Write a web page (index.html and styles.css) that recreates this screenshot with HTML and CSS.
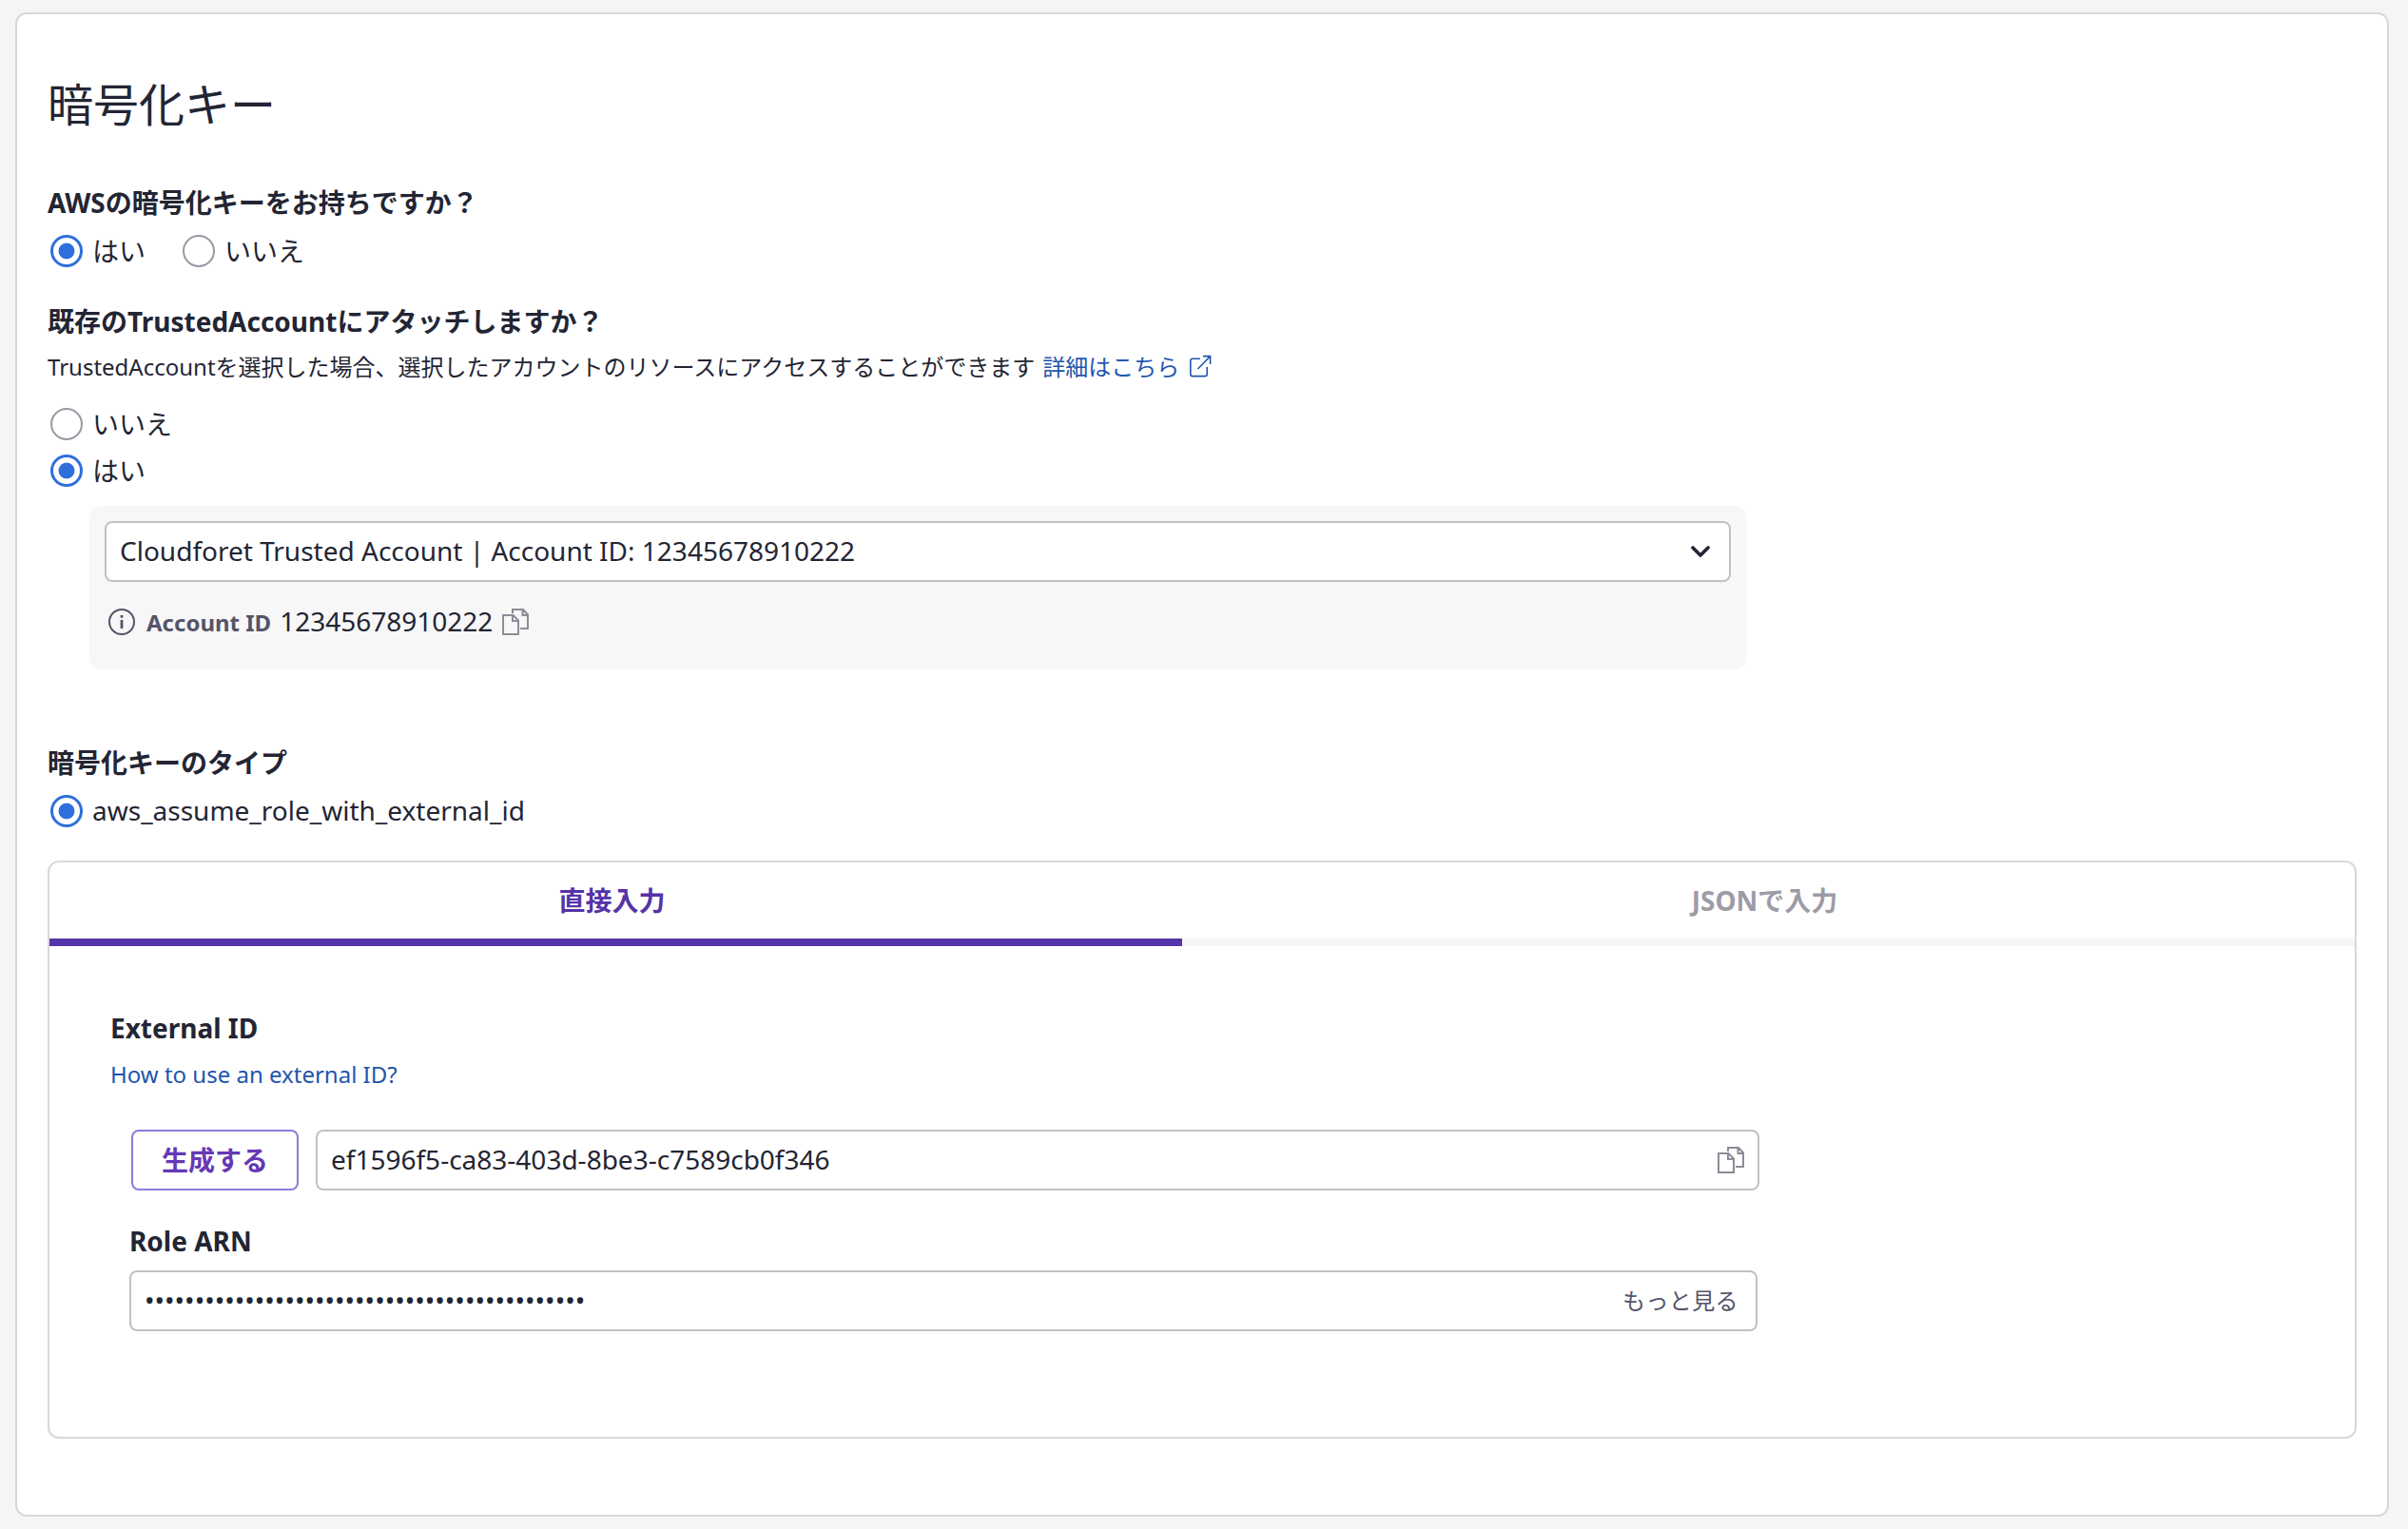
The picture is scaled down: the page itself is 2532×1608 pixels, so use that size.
FILE: index.html
```html
<!DOCTYPE html>
<html lang="ja">
<head>
<meta charset="utf-8">
<title>暗号化キー</title>
<link rel="stylesheet" href="styles.css">
</head>
<body>
<svg class="defs" width="0" height="0">
  <symbol id="copy" viewBox="0 0 28 28">
    <path d="M1 7h10.500l5.500 5.500V27H1zM11 7v6h6M11 5V1h11l5 5.500V21h-8M21.500 1v6H27" fill="none" stroke="currentColor" stroke-width="2"/>
  </symbol>
</svg>
<main class="card">
  <h1 class="title">暗号化キー</h1>

  <section class="field">
    <h2 class="label">AWSの暗号化キーをお持ちですか？</h2>
    <div class="options">
      <label class="option"><span class="radio radio-on"></span>はい</label>
      <label class="option"><span class="radio"></span>いいえ</label>
    </div>
  </section>

  <section class="field trusted">
    <h2 class="label">既存のTrustedAccountにアタッチしますか？</h2>
    <p class="help"><span>TrustedAccountを選択した場合、選択したアカウントのリソースにアクセスすることができます</span><a class="link">詳細はこちら</a><svg class="external" viewBox="0 0 24 24"><path d="M12 4.200H4A2.200 2.200 0 0 0 1.800 6.400v14A2.200 2.200 0 0 0 4 22.600h13a2.200 2.200 0 0 0 2.200-2.200V13M15 1.600h7.600V10M22.600 1.600L9.500 15" fill="none" stroke="currentColor" stroke-width="1.600"/></svg></p>
    <div class="option-list">
      <label class="option"><span class="radio"></span>いいえ</label>
      <label class="option"><span class="radio radio-on"></span>はい</label>
    </div>
    <div class="account-panel">
      <div class="box select">
        <span class="value">Cloudforet Trusted Account | Account ID: 12345678910222</span>
        <svg class="chevron" viewBox="0 0 20 12"><path d="M2 2l8 8 8-8" fill="none" stroke="currentColor" stroke-width="3.600" stroke-linecap="round" stroke-linejoin="round"/></svg>
      </div>
      <div class="account">
        <svg class="info" viewBox="0 0 28 28"><circle cx="14" cy="14" r="13" fill="none" stroke="currentColor" stroke-width="2"/><path d="M12.600 7h2.800v2.800h-2.800zM12.600 12h2.800v9h-2.800z" fill="currentColor"/></svg>
        <strong class="account-label">Account ID</strong>
        <span class="account-id value">12345678910222</span>
        <svg class="copy"><use href="#copy"/></svg>
      </div>
    </div>
  </section>

  <section class="field key-type">
    <h2 class="label">暗号化キーのタイプ</h2>
    <div class="options">
      <label class="option"><span class="radio radio-on"></span><span class="value">aws_assume_role_with_external_id</span></label>
    </div>
  </section>

  <section class="tabs">
    <nav class="tab-bar">
      <div class="tab tab-active">直接入力</div>
      <div class="tab">JSONで入力</div>
    </nav>
    <div class="tab-body">
      <h3 class="sub">External ID</h3>
      <a class="link how-to">How to use an external ID?</a>
      <div class="generate-row">
        <button class="generate" type="button">生成する</button>
        <div class="box external-id"><span class="value">ef1596f5-ca83-403d-8be3-c7589cb0f346</span><svg class="copy"><use href="#copy"/></svg></div>
      </div>
      <div class="role">
        <h3 class="sub">Role ARN</h3>
        <div class="box role-input"><span class="value">••••••••••••••••••••••••••••••••••••••••••••</span><span class="more">もっと見る</span></div>
      </div>
    </div>
  </section>
</main>
</body>
</html>
```
FILE: styles.css
```css
* { box-sizing: border-box; }
body {
  margin: 0;
  height: 1608px;
  padding: 13px 20px 13px 16px;
  background: #f5f5f5;
  color: #232533;
  font-family: "Noto Sans", "Noto Sans CJK JP", sans-serif;
  font-size: 28px;
  line-height: 40px;
}
h1, h2, h3, p { margin: 0; }
.defs { position: absolute; }
.card {
  height: 1582px;
  padding: 65px 32px 0;
  background: #fff;
  border: 2px solid #d8d8d8;
  border-radius: 12px;
}
.title { font-size: 48px; font-weight: 400; line-height: 60px; }
.field { display: flex; flex-direction: column; }
.label { margin-top: 53px; font-size: 28px; font-weight: 700; line-height: 40px; }
.options { display: flex; gap: 36px; margin-top: 11px; }
.option { display: flex; align-items: center; gap: 7px; height: 40px; }
.radio {
  width: 34px;
  height: 34px;
  margin: 3px;
  border: 2px solid #9a99a3;
  border-radius: 50%;
}
.radio-on {
  border: 3px solid #2f6fdd;
  background: radial-gradient(circle, #2f6fdd 8px, #fff 8.8px);
}
/* Latin values sit slightly above the optical centre of their row */
.value { padding-bottom: 2px; }
.trusted .label { margin-top: 34px; }
.help { display: flex; align-items: center; height: 36px; margin-top: 10px; font-size: 24px; }
.link { color: #2255ad; font-size: 24px; }
.help .link { margin-left: 8px; }
.external { width: 24px; height: 24px; margin: 0 0 2px 10px; color: #2255ad; }
.option-list { display: flex; flex-direction: column; gap: 9px; margin-top: 22px; }
.account-panel {
  width: 1742px;
  height: 172px;
  margin: 17px 0 0 44px;
  padding: 16px;
  background: #f7f7f7;
  border-radius: 12px;
}
.box {
  display: flex;
  align-items: center;
  justify-content: space-between;
  height: 64px;
  padding: 0 14px;
  background: #fff;
  border: 2px solid #c1c0c7;
  border-radius: 8px;
}
.select { padding-right: 20px; }
.chevron { width: 20px; height: 12px; }
.account { display: flex; align-items: center; height: 40px; margin: 22px 0 0 4px; }
.info { width: 28px; height: 28px; color: #545469; }
.account-label { margin-left: 12px; padding-top: 2px; color: #545469; font-size: 24px; }
.account-id { margin-left: 9px; }
.copy { width: 28px; height: 28px; color: #8d8b98; }
.account .copy { margin-left: 10px; }
.key-type .label { margin-top: 78px; }
.tabs {
  height: 608px;
  margin-top: 32px;
  border: 2px solid #d8d8d8;
  border-radius: 12px;
}
.tab-bar { display: grid; grid-template-columns: 1191px 1fr; height: 88px; }
.tab {
  padding: 20px 8px 0 0;
  border-bottom: 8px solid #f5f5f5;
  color: #9d9ca6;
  font-weight: 700;
  text-align: center;
}
.tab-active { border-color: #5533a8; color: #5533a8; }
.tab-body { display: flex; flex-direction: column; align-items: flex-start; padding: 66px 64px 0; }
.sub { font-size: 28px; font-weight: 700; line-height: 40px; }
.how-to { margin-top: 9px; }
.generate-row { display: flex; gap: 18px; margin: 38px 0 0 22px; }
.generate {
  width: 176px;
  height: 64px;
  padding: 0;
  background: #fff;
  border: 2px solid #8c7cdb;
  border-radius: 8px;
  color: #6638b6;
  font: inherit;
  font-weight: 700;
}
.external-id { width: 1518px; }
.role { margin: 33px 0 0 20px; }
.role-input { width: 1712px; margin-top: 11px; padding-right: 18px; }
.more { color: #545469; font-size: 24px; letter-spacing: 0.4px; }
```
